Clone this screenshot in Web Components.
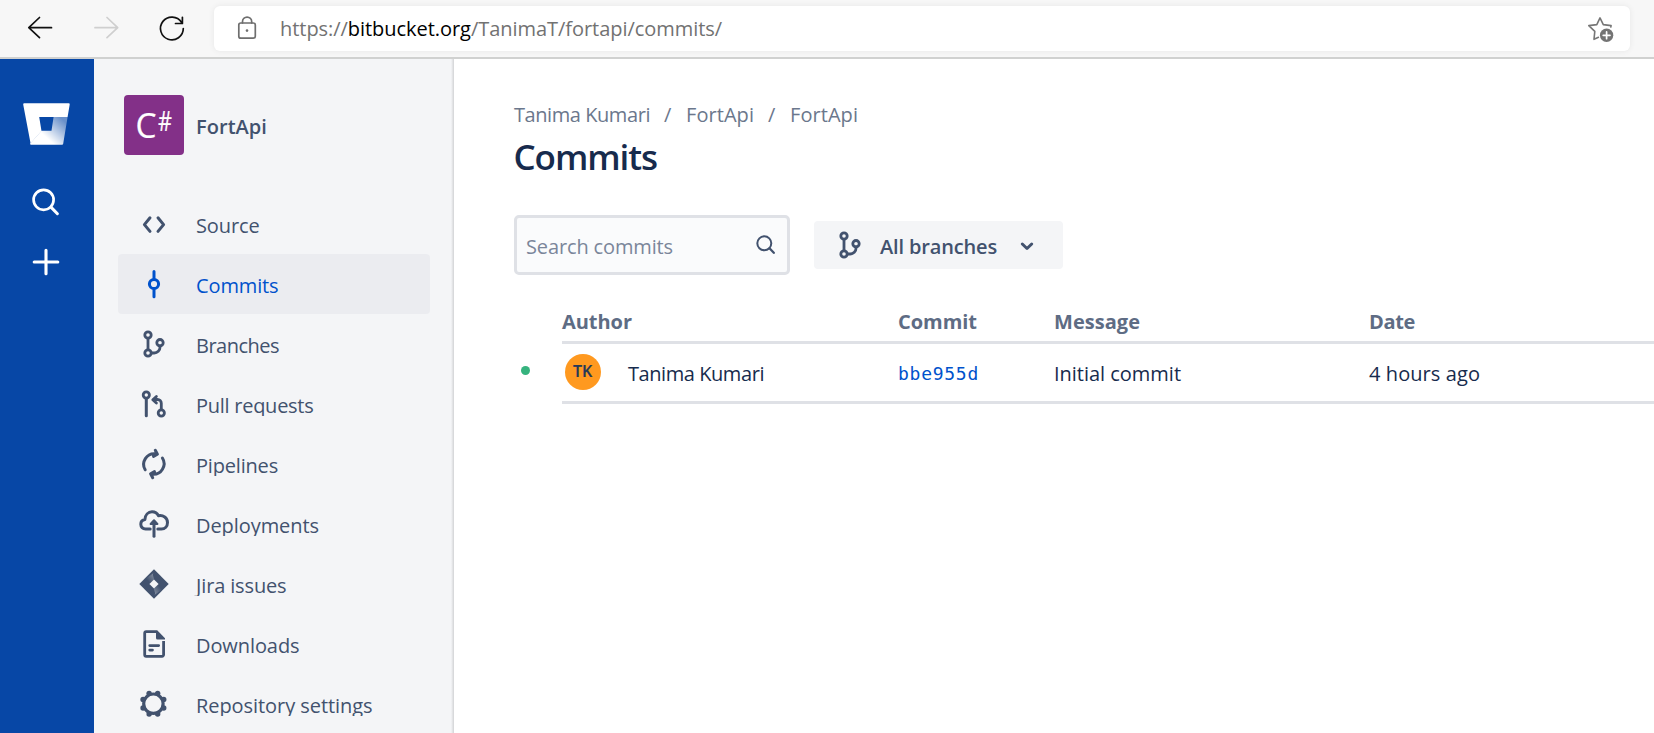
<!DOCTYPE html>
<html lang="en">
<head>
<meta charset="utf-8">
<title>FortApi — Commits</title>
<style>
html,body{margin:0;height:100%;overflow:hidden;background:#fff}
body{font-family:"Open Sans","Noto Sans",sans-serif;font-size:20px;color:#172b4d}
</style>
</head>
<body>
<app-window></app-window>
<script>
const define = (name, html, setup) => {
  const tpl = document.createElement('template');
  tpl.innerHTML = html;
  customElements.define(name, class extends HTMLElement {
    connectedCallback() {
      if (this.shadowRoot) return;
      this.attachShadow({mode: 'open'}).append(tpl.content.cloneNode(true));
      if (setup) setup(this, this.shadowRoot);
    }
  });
};

/* Single-line label; `w` is the advance width the tracking is tuned to. */
define('fit-text', `<style>
:host{display:block;white-space:pre;line-height:30px;height:28px;flex:none}
span{display:inline-block}
</style><span><slot></slot></span>`, (el, root) => {
  const span = root.querySelector('span');
  const w = parseFloat(el.getAttribute('w'));
  const n = el.textContent.length;
  el.style.width = w + 'px';
  span.style.letterSpacing = (w - 1 - span.getBoundingClientRect().width) / n + 'px';
});

const branch = '<g stroke-width="2.8"><circle cx="10" cy="7" r="3.2"/><circle cx="10" cy="25" r="3.2"/><circle cx="22" cy="14.7" r="3.2"/><path d="M10 10.5v11M22 18v1.2a5.8 5.8 0 0 1-5.8 5.8H13.5"/></g>';
const teeth = Array.from({length: 8}, (_, i) => {
  const a = (22.5 + 45 * i) * Math.PI / 180;
  return `<circle cx="${15.4 + 11.2 * Math.cos(a)}" cy="${15.7 + 11.2 * Math.sin(a)}" r="2.7" fill="currentColor" stroke="none"/>`;
}).join('');
const icons = {
  source: '<path d="M12 9.8 6.4 16.6l5.6 6.8M20 9.8l5.6 6.8-5.6 6.8"/>',
  commits: '<circle cx="16" cy="16" r="4.6"/><path d="M16 3.5v7M16 21.5v7.2"/>',
  branches: branch,
  pulls: '<g stroke-width="2.8"><circle cx="8.3" cy="7" r="3.1"/><circle cx="23.3" cy="25" r="3.1"/><path d="M23.3 21.5v-6.2a3.8 3.8 0 0 0-3.8-3.8H15.5M18.4 8.5l-3.6 3.2 3.6 3.4"/></g><path d="M8.3 10.500v17.200"/>',
  pipelines: '<path d="M7.200 21.800A10.600 10.600 0 0 1 17.500 5.800M17.300 2.300l2.100 4-3.900 2.100"/><path d="M24.400 10A10.600 10.600 0 0 1 14.500 26.200M14.700 29.700l-2.100-4 3.900-2.100"/>',
  deployments: '<path d="M12.2 21H7.6C4.7 21 2.8 19 2.8 16.3c0-2.5 1.6-4.4 4.1-4.8C7.2 7 10.2 3.8 14 3.8c3 0 5.3 1.5 6.4 3.9 4.7-.9 9.1 1.9 9.1 6.7 0 4-2.6 6.6-6.1 6.6H19.8"/><path d="M16 15v13.2"/><path d="M16 12.3l-3.400 3.600h6.800Z" fill="currentColor" stroke-width="2"/>',
  jira: '<defs><linearGradient id="a" x1="0" y1="1" x2="1" y2="0"><stop offset=".25" stop-color="#42526e"/><stop offset=".85" stop-color="#7d889b"/></linearGradient><linearGradient id="b" x1="1" y1="0" x2="0" y2="1"><stop offset=".25" stop-color="#42526e"/><stop offset=".85" stop-color="#7d889b"/></linearGradient></defs><path d="M16 1.300 30.700 16 16 30.700 1.300 16Z" fill="currentColor" stroke="none"/><path d="M15.500 5C14 7 16 9 16 11.500L11.700 15.500 8 10.500Z" fill="url(#a)" stroke="none"/><path d="M16.500 27C18 25 16 23 16 20.500L20.300 16.500 24 21.500Z" fill="url(#b)" stroke="none"/><path d="M16 11.400 20.600 16 16 20.600 11.400 16Z" fill="#f4f5f7" stroke="none"/>',
  downloads: '<path d="M25.600 13V26.800a1.500 1.500 0 0 1-1.500 1.500H8.200a1.500 1.500 0 0 1-1.500-1.500V5.200a1.500 1.500 0 0 1 1.500-1.500H18" stroke-width="2.800" stroke-linecap="butt"/><path d="M18 2.300h1.200L27 10.200v1.300H19.500A1.500 1.500 0 0 1 18 10Z" fill="currentColor" stroke="none"/><path d="M11.700 17.600h9M11.700 22.100h2.800" stroke-width="2.700"/>',
  settings: '<circle cx="15.400" cy="15.700" r="9.700" stroke-width="3.200"/>' + teeth
};
define('ui-icon', `<style>
:host{display:block;flex:none;width:32px;height:32px}
svg{display:block;fill:none;stroke:currentColor;stroke-width:3;stroke-linecap:round;stroke-linejoin:round}
</style><svg width="32" height="32" viewBox="0 0 32 32"></svg>`, (el, root) => {
  root.querySelector('svg').innerHTML = icons[el.getAttribute('name')];
});

define('browser-bar', `<style>
:host{display:flex;height:57px;box-sizing:content-box;border-bottom:2px solid #d0d1d0;background:#f7f7f7;padding-right:24px}
.nav{width:214px;flex:none}
.box{flex:1;height:45px;margin-top:6px;background:#fff;border-radius:6px;box-shadow:0 0 6px rgba(0,0,0,.07);display:flex;align-items:flex-start}
svg{display:block;flex:none;fill:none;stroke-linecap:round;stroke-linejoin:round}
fit-text{margin:8px auto 0 0;color:#727272}
b{font-weight:400;color:#000}
</style>
<svg class="nav" width="214" height="57" stroke="#111" stroke-width="1.7"><path d="M51.5 27.7H29M39.500 17.500 28.800 27.700l10.700 10"/><path stroke="#cfcfcf" d="M95 27.700h22.500M107 17.500l10.700 10.200-10.700 10"/><path d="M181.500 22.300A11.400 11.400 0 1 0 183.300 28.500M182.400 17.300v6.200H175.500"/></svg>
<div class="box">
<svg width="66" height="45" stroke="#6e6e6e" stroke-width="1.7"><rect x="24.800" y="17" width="16.500" height="15.200" rx="2"/><path d="M28.500 17v-1.300a4.600 4.600 0 0 1 9.200 0V17"/><circle cx="33" cy="24.600" r="1.300" fill="#6e6e6e" stroke="none"/></svg>
<fit-text w="443">https://<b>bitbucket.org</b>/TanimaT/fortapi/commits/</fit-text>
<svg width="50" height="45" stroke="#767676" stroke-width="1.6"><path d="M18.500 31.300 14 33.300 14.800 25.300 8.800 19.600 16.800 18.600 20 11.900 23.300 18.600 31.100 19.600 30.800 21"/><circle cx="26.600" cy="29.300" r="7.600" fill="#fff" stroke="none"/><circle cx="26.600" cy="29.300" r="6.700" fill="#747474" stroke="none"/><path d="M26.600 25.900v6.800M23.200 29.300h6.800" stroke="#fff" stroke-width="1.700"/></svg>
</div>`);

define('global-rail', `<style>
:host{display:block;width:94px;flex:none;background:#0747a6}
svg{display:block}
</style>
<svg width="94" height="230" viewBox="0 59 94 230" fill="none" stroke="#fff" stroke-linecap="round">
<defs><linearGradient id="g" gradientUnits="userSpaceOnUse" x1="66" y1="117" x2="47" y2="138"><stop offset=".15" stop-color="#fff" stop-opacity=".4"/><stop offset="1" stop-color="#fff"/></linearGradient></defs>
<path fill="#fff" stroke="none" d="M24.200 103.300H68.600A1.100 1.100 0 0 1 69.700 104.600L67.600 117H39.200L41.500 131 30.600 143.500 23.200 104.500A1.100 1.100 0 0 1 24.200 103.300Z"/>
<path fill="url(#g)" stroke="none" d="M67.600 117 63.200 143.800A1.200 1.200 0 0 1 62 144.800H31.200A1.200 1.200 0 0 1 30 143.700L41.400 130.800H51.500L53.600 117Z"/>
<circle cx="43.600" cy="199.800" r="10" stroke-width="2.700"/><path stroke-width="3" d="m51.200 207.400 6.200 6.300"/>
<path stroke-width="3.100" d="M46 250.200v23.600M34.200 262h23.600"/>
</svg>`);

define('nav-item', `<style>
:host{display:flex;height:60px;margin:0 24px;padding-left:20px;border-radius:4px;color:#42526e;box-sizing:border-box}
:host([selected]){background:#ebecf0;color:#0052cc}
::slotted(ui-icon){margin-top:14px}
.t{height:25px;overflow:hidden;margin:17px 0 0 20px;padding-left:6px}
</style><slot name="icon"></slot><div class="t"><slot></slot></div>`, (el) => {
  const icon = document.createElement('ui-icon');
  icon.slot = 'icon';
  icon.setAttribute('name', el.getAttribute('icon'));
  el.append(icon);
});

define('project-head', `<style>
:host{display:flex;height:60px;margin:36px 0 39px 30px;color:#42526e}
svg{display:block;background:#833088;border-radius:4px}
fit-text{font-weight:600;margin:17px 0 0 12px}
text{font-family:"Open Sans",sans-serif;fill:#fff;stroke:#fff;stroke-width:.2px}
</style>
<svg width="60" height="60"><text x="11.500" y="43" font-size="34" textLength="21" lengthAdjust="spacingAndGlyphs">C</text><text x="34" y="36" font-size="27" textLength="14" lengthAdjust="spacingAndGlyphs">#</text></svg>
<fit-text w="72">FortApi</fit-text>`);

define('side-nav', `<style>
:host{display:flex;flex-direction:column;width:360px;flex:none;overflow:hidden;background:linear-gradient(to right,transparent 357px,#e9eaec 358px,#d2d3d5 360px),#f4f5f7}
nav-item{flex:none}
</style><project-head></project-head>
<nav-item icon="source"><fit-text w="64.500">Source</fit-text></nav-item>
<nav-item icon="commits" selected><fit-text w="83.500">Commits</fit-text></nav-item>
<nav-item icon="branches"><fit-text w="84">Branches</fit-text></nav-item>
<nav-item icon="pulls"><fit-text w="118.500">Pull requests</fit-text></nav-item>
<nav-item icon="pipelines"><fit-text w="83">Pipelines</fit-text></nav-item>
<nav-item icon="deployments"><fit-text w="124">Deployments</fit-text></nav-item>
<nav-item icon="jira"><fit-text w="91.500">Jira issues</fit-text></nav-item>
<nav-item icon="downloads"><fit-text w="104.500">Downloads</fit-text></nav-item>
<nav-item icon="settings"><fit-text w="177.500">Repository settings</fit-text></nav-item>`);

define('page-head', `<style>
:host{display:block}
.crumbs{display:flex;color:#6b778c}
.s{margin:0 12px 0 13px}
.title{font-size:35px;font-weight:600;line-height:48px;height:48px;margin-top:5px;color:#172b4d;margin-left:-.5px}
</style><div class="crumbs"><fit-text w="137">Tanima Kumari</fit-text><fit-text class="s" w="10">/</fit-text><fit-text w="69">FortApi</fit-text><fit-text class="s" w="10">/</fit-text><fit-text w="69">FortApi</fit-text></div>
<fit-text class="title" w="144.500">Commits</fit-text>`);

define('filter-bar', `<style>
:host{display:flex;align-items:center;margin-top:34px;gap:24px}
.search{width:276px;height:60px;box-sizing:border-box;border:3px solid #dfe1e6;border-radius:5px;background:#fafbfc;display:flex;color:#7a869a;padding:14px 11px 0 9px;justify-content:space-between}
svg{fill:none;stroke:#42526e;stroke-linecap:round;stroke-linejoin:round;display:block;flex:none}
.btn{width:249px;height:48px;border-radius:4px;background:#f4f5f7;display:flex;color:#42526e;box-sizing:border-box;padding-left:20px}
.btn ui-icon{margin-top:8px}
.btn fit-text{font-weight:600;margin:11px 0 0 14px}
.btn svg{margin:20px 0 0 22px}
</style><div class="search"><fit-text w="148">Search commits</fit-text><svg width="20" height="20" style="margin-top:3px"><circle cx="8.300" cy="8.300" r="7" stroke-width="2"/><path stroke-width="2.300" d="m13.500 13.300 4.300 4.500"/></svg></div>
<div class="btn"><ui-icon name="branches"></ui-icon><fit-text w="118">All branches</fit-text><svg width="14" height="12"><path stroke-width="3" d="m2.300 3 4.700 4.500L11.700 3"/></svg></div>`);

define('commit-table', `<style>
:host{display:block;margin-top:32px}
.r{display:grid;grid-template-columns:48px 336px 156px 315px 1fr;height:37px}
.r>*{border-bottom:3px solid #dfe1e6}
.r>.dot{border:0}
.h{font-weight:700;color:#5e6c84}
.b{height:60px;color:#172b4d}
.b .c{padding-top:15px;box-sizing:border-box}
.b .a{display:flex;align-items:flex-start;padding:0}
.av{width:36px;height:36px;border-radius:50%;background:#ff991f;margin:10px 27px 0 3px;display:flex;justify-content:center;align-items:center}
.av fit-text{font:600 16px/19px "Open Sans",sans-serif;height:20px;color:#253858;-webkit-text-stroke:.2px #253858}
.a>fit-text{margin-top:15px}
.dot i{display:block;width:9px;height:9px;border-radius:50%;background:#36b37e;margin:22px 0 0 7px}
.l{color:#0052cc}
.l fit-text{font-family:"DejaVu Sans Mono",monospace;font-size:18px;line-height:29px}
</style>
<div class="r h"><div class="dot"></div><div><fit-text w="71">Author</fit-text></div><div><fit-text w="80">Commit</fit-text></div><div><fit-text w="87">Message</fit-text></div><div><fit-text w="47">Date</fit-text></div></div>
<div class="r b"><div class="dot"><i></i></div><div class="a"><div class="av"><fit-text w="20">TK</fit-text></div><fit-text w="137">Tanima Kumari</fit-text></div><div class="c l"><fit-text w="82">bbe955d</fit-text></div><div class="c"><fit-text w="128">Initial commit</fit-text></div><div class="c"><fit-text w="112">4 hours ago</fit-text></div></div>`);

define('app-window', `<style>
:host{display:flex;flex-direction:column;height:100vh;overflow:hidden}
.body{flex:1;display:flex;min-height:0}
main{flex:1;min-width:0;padding:41px 0 0 60px;background:#fff}
</style><browser-bar></browser-bar><div class="body"><global-rail></global-rail><side-nav></side-nav><main><page-head></page-head><filter-bar></filter-bar><commit-table></commit-table></main></div>`);
</script>
</body>
</html>
